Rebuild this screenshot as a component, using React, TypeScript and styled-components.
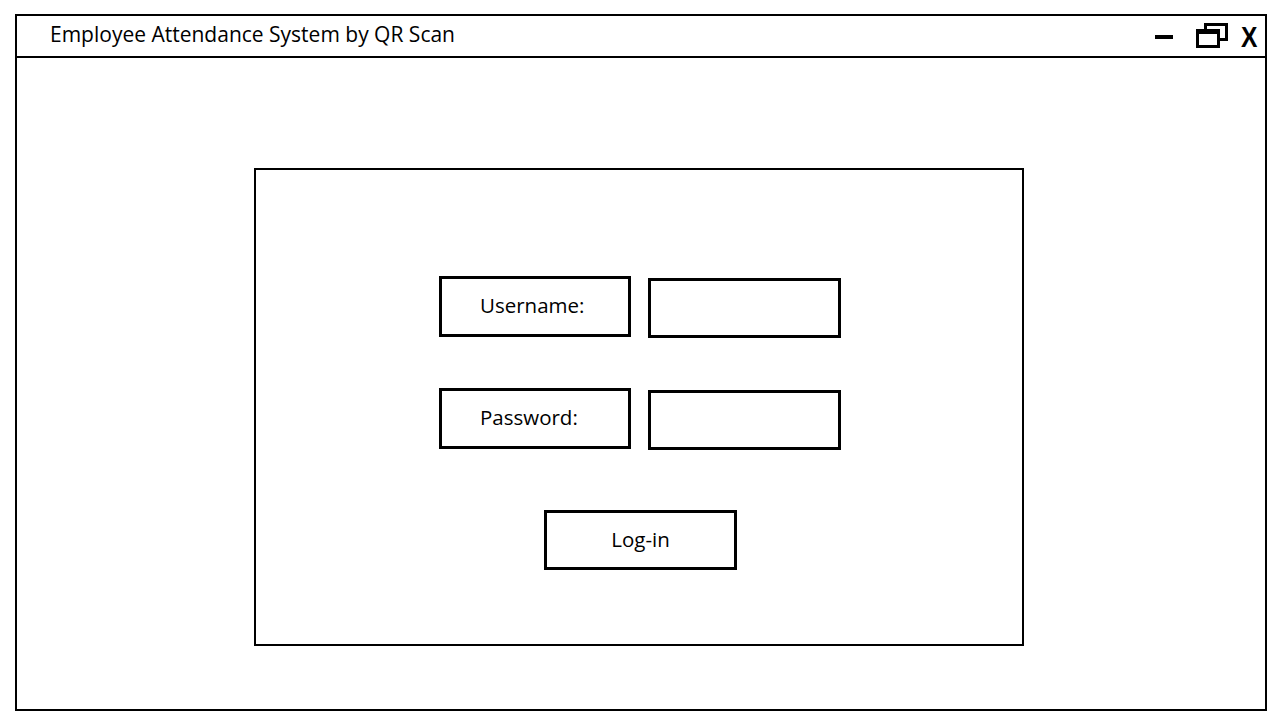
import {createGlobalStyle, styled} from "styled-components";

const GlobalStyle = createGlobalStyle`
  html, body {
    margin: 0;
    padding: 0;
    background: #ffffff;
  }
  body {
    font-family: "Open Sans", "Noto Sans", sans-serif;
    color: #000000;
  }
`;

const Page = styled.div`
  width: 1280px;
  height: 720px;
  padding: 14px 0 0 15px;
  box-sizing: border-box;
`;

const Window = styled.div`
  width: 1252px;
  height: 697px;
  border: 2px solid #000;
  box-sizing: border-box;
  display: flex;
  flex-direction: column;
`;

const TitleBar = styled.div`
  height: 42px;
  border-bottom: 2px solid #000;
  box-sizing: border-box;
  display: flex;
  align-items: center;
  justify-content: space-between;
  padding: 0 6px 0 33px;
`;

const Title = styled.span`
  font-size: 21px;
  line-height: 1;
  margin-top: -3px;
`;

const Controls = styled.div`
  display: flex;
  align-items: center;
  gap: 12px;
  height: 100%;
`;

const Minimize = styled.span`
  display: block;
  width: 18px;
  height: 4px;
  background: #000;
  margin-top: 1px;
  margin-right: 11px;
`;

const CloseGlyph = styled.span`
  font-family: "Liberation Sans", Arial, sans-serif;
  font-weight: 700;
  font-size: 29px;
  line-height: 1;
  display: inline-block;
  transform: scaleX(0.85);
  transform-origin: left center;
  width: 18px;
  margin-top: 2px;
`;

const Body = styled.div`
  flex: 1;
  padding: 110px 0 0 237px;
`;

const Panel = styled.div`
  width: 770px;
  height: 478px;
  border: 2px solid #000;
  box-sizing: border-box;
  display: flex;
  flex-direction: column;
  align-items: flex-start;
  padding: 106px 0 0 183px;
`;

const Row = styled.div`
  display: flex;
  align-items: flex-start;
  gap: 17px;
  margin-bottom: 50px;
`;

const Box = styled.div<{$w: number; $h: number}>`
  width: ${(p) => p.$w}px;
  height: ${(p) => p.$h}px;
  border: 3px solid #000;
  box-sizing: border-box;
  display: flex;
  align-items: center;
  font-size: 20.5px;
`;

const Label = styled(Box)`
  padding-left: 38px;
  padding-bottom: 3px;
`;

const Field = styled(Box)`
  margin-top: 2px;
`;

const Button = styled(Box)`
  justify-content: center;
  margin: 10px 0 0 105px;
  padding-bottom: 3px;
`;

const RestoreIcon = () => (
  <svg width="33" height="26" viewBox="0 0 33 26" style={{display: "block", marginTop: -1}}>
    <rect x="9.5" y="1.5" width="21" height="15" fill="#fff" stroke="#000" strokeWidth="3" />
    <rect x="1.5" y="8" width="21" height="15.5" fill="#fff" stroke="#000" strokeWidth="3" />
    <rect x="0" y="6" width="24" height="5" fill="#000" />
  </svg>
);

export default function App() {
  return (
    <>
      <GlobalStyle />
      <Page>
        <Window>
          <TitleBar>
            <Title>Employee Attendance System by QR Scan</Title>
            <Controls>
              <Minimize />
              <RestoreIcon />
              <CloseGlyph>X</CloseGlyph>
            </Controls>
          </TitleBar>
          <Body>
            <Panel>
              <Row>
                <Label $w={192} $h={61}>Username:</Label>
                <Field $w={193} $h={60} />
              </Row>
              <Row>
                <Label $w={192} $h={61}>Password:</Label>
                <Field $w={193} $h={60} />
              </Row>
              <Button $w={193} $h={60}>Log-in</Button>
            </Panel>
          </Body>
        </Window>
      </Page>
    </>
  );
}
